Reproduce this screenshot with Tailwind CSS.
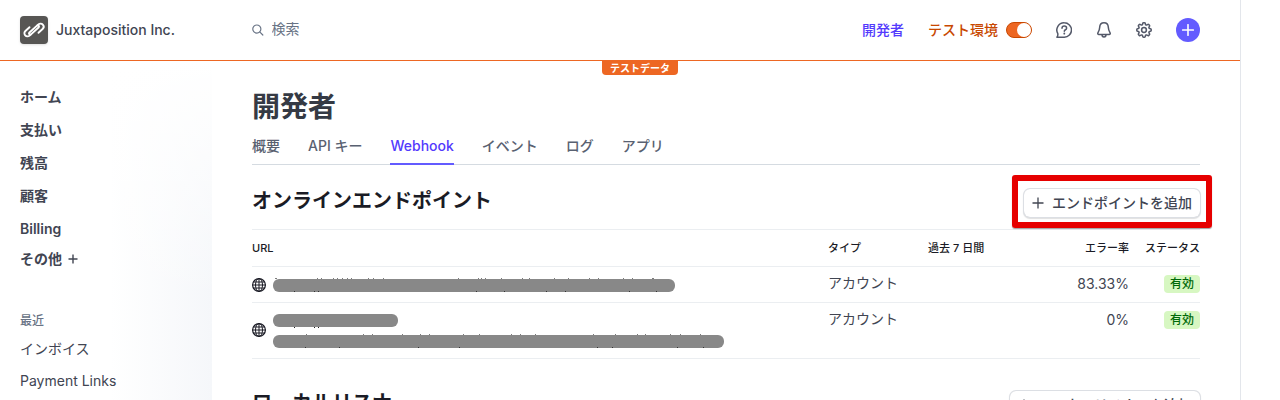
<!DOCTYPE html>
<html lang="ja">
<head>
    <meta charset="UTF-8">
    <meta name="viewport" content="width=device-width, initial-scale=1.0">
    <script src="https://cdn.jsdelivr.net/npm/@tailwindcss/browser@4"></script>
    <title>開発者 - Webhook</title>
</head>
<body class="relative h-screen overflow-hidden bg-white font-['Inter','Noto_Sans_CJK_JP',sans-serif] text-sm text-[#414552]">

<div class="mr-10 flex h-full flex-col shadow-[1px_0_0_#e3e6eb]">

    <!-- Top bar -->
    <header class="flex h-[61px] shrink-0 items-center border-b border-[#ed6723] pr-10">
        <div class="flex w-63 shrink-0 items-center gap-2 pl-5">
            <span class="size-7 rounded bg-[#575654] shadow-sm">
                <svg class="size-7" viewBox="0 0 28 28" fill="none" stroke="#fff" stroke-width="1.9" stroke-linecap="round" stroke-linejoin="round">
                    <path d="M9.500 11.200 5.400 15A3.100 3.100 0 0 0 9.600 19.600L18.800 11.200A1.200 1.200 0 0 0 17.200 9.500"/>
                    <path d="M18.500 16.800 22.600 13A3.100 3.100 0 0 0 18.400 8.400L9.200 16.800A1.200 1.200 0 0 0 10.800 18.500"/>
                </svg>
            </span>
            <span class="font-medium">Juxtaposition Inc.</span>
        </div>

        <label class="flex flex-1 items-center gap-2 text-[#687385]">
            <svg class="size-3" viewBox="0 0 12 12" fill="none" stroke="currentColor" stroke-width="1.2" stroke-linecap="round">
                <circle cx="5" cy="5" r="4.200"/>
                <path d="m8.200 8.200 3 3"/>
            </svg>
            <input type="search" placeholder="検索" aria-label="検索" class="w-full pb-0.5 outline-none placeholder:text-[#687385]">
        </label>

        <div class="flex shrink-0 items-center gap-6">
            <a href="#" class="font-medium text-[#533afd]">開発者</a>
            <label class="flex items-center gap-2 font-medium text-[#c84801]">
                テスト環境
                <input type="checkbox" checked class="h-4 w-[26px] appearance-none rounded-full border border-[#c84801] bg-[#ed6723] before:ml-auto before:block before:size-3.5 before:rounded-full before:bg-white">
            </label>
            <button type="button" aria-label="ヘルプ" class="text-[#545969]">
                <svg class="size-4" viewBox="0 0 16 16" fill="none" stroke="currentColor" stroke-width="1.5" stroke-linecap="round" stroke-linejoin="round">
                    <path d="M8.300.8a7.200 7.200 0 1 1 0 14.400H.9c.9-1 1.100-2.200.9-3.600A7.200 7.200 0 0 1 8.300.8z"/>
                    <path d="M6 6.300c0-3 4.600-2.900 4.600-.1 0 1.600-2.300 1.500-2.300 3"/>
                    <path d="M8.300 11.500v.2" stroke-width="1.800"/>
                </svg>
            </button>
            <button type="button" aria-label="通知" class="text-[#545969]">
                <svg class="size-4" viewBox="0 0 16 16" fill="none" stroke="currentColor" stroke-width="1.500" stroke-linejoin="round">
                    <path d="M8 .8C5.400.8 3.800 2.700 3.700 5.200c-.1 2.500-.6 3.700-1.800 5.600-.4.800 0 1.600.9 1.600h10.400c.9 0 1.300-.8.9-1.600-1.200-1.900-1.700-3.100-1.800-5.600C12.200 2.700 10.600.8 8 .8z"/>
                    <path d="M6 12.600c0 3.300 4 3.300 4 0"/>
                </svg>
            </button>
            <button type="button" aria-label="設定" class="text-[#545969]">
                <svg class="size-4" viewBox="2 2 20 20" fill="none" stroke="currentColor" stroke-width="1.9" stroke-linejoin="round">
                    <path d="M10.343 3.940c.09-.542.56-.94 1.110-.94h1.093c.55 0 1.020.398 1.110.94l.149.894c.07.424.384.764.78.930.398.164.855.142 1.205-.108l.737-.527a1.125 1.125 0 0 1 1.450.12l.773.774c.39.389.44 1.002.12 1.450l-.527.737c-.25.35-.272.806-.107 1.204.165.397.505.71.93.78l.893.15c.543.09.94.56.94 1.109v1.094c0 .55-.397 1.020-.94 1.110l-.893.149c-.425.07-.765.383-.93.78-.165.398-.143.854.107 1.204l.527.738c.32.447.269 1.060-.12 1.450l-.774.773a1.125 1.125 0 0 1-1.449.12l-.738-.527c-.35-.25-.806-.272-1.203-.107-.397.165-.71.505-.781.929l-.149.894c-.09.542-.56.94-1.110.94h-1.094c-.55 0-1.019-.398-1.110-.94l-.148-.894c-.071-.424-.384-.764-.781-.93-.398-.164-.854-.142-1.204.108l-.738.527c-.447.32-1.060.269-1.450-.12l-.773-.774a1.125 1.125 0 0 1-.12-1.450l.527-.737c.25-.35.273-.806.108-1.204-.165-.397-.505-.71-.93-.78l-.894-.15c-.542-.09-.94-.56-.94-1.109v-1.094c0-.55.398-1.020.94-1.110l.894-.149c.424-.07.765-.383.93-.78.165-.398.143-.854-.107-1.204l-.527-.738a1.125 1.125 0 0 1 .12-1.450l.773-.773a1.125 1.125 0 0 1 1.450-.12l.737.527c.35.25.807.272 1.204.107.397-.165.71-.505.78-.929l.15-.894z"/>
                    <circle cx="12" cy="12" r="3"/>
                </svg>
            </button>
            <button type="button" aria-label="作成" class="flex size-6 items-center justify-center rounded-full bg-[#635bff] text-white">
                <svg class="size-3" viewBox="0 0 12 12" stroke="currentColor" stroke-width="1.600" stroke-linecap="round"><path d="M6 .7v10.600M.7 6h10.600"/></svg>
            </button>
        </div>
    </header>

    <div class="flex min-h-0 flex-1">

        <!-- Sidebar -->
        <nav class="w-53 shrink-0 bg-[linear-gradient(to_bottom,#ffffff,#ffffff00_240px),linear-gradient(to_right,#ffffff_110px,#f5f7fa)] pt-5 pl-5 *:flex *:items-center">
            <a href="#" class="h-8 font-semibold">ホーム</a>
            <a href="#" class="h-[33px] font-semibold">支払い</a>
            <a href="#" class="h-[33px] font-semibold">残高</a>
            <a href="#" class="h-[33px] font-semibold">顧客</a>
            <a href="#" class="h-[33px] font-semibold">Billing</a>
            <button type="button" class="h-7 gap-1.5 font-semibold">
                その他
                <svg class="size-2.5" viewBox="0 0 10 10" stroke="currentColor" stroke-width="1.400"><path d="M5 .5v9M.5 5h9"/></svg>
            </button>
            <h2 class="mt-9 h-6 text-xs font-medium text-[#687385]">最近</h2>
            <a href="#" class="h-8">インボイス</a>
            <a href="#" class="h-8">Payment Links</a>
        </nav>

        <!-- Main column -->
        <main class="min-w-0 flex-1 px-10 pt-6">
            <h1 class="text-[28px] leading-11 font-bold text-[#353a44]">開発者</h1>

            <div class="flex h-9 gap-7 border-b border-[#d5dbe1] font-medium text-[#596171] *:-mb-px *:pt-[7px]">
                <a href="#">概要</a>
                <a href="#">API キー</a>
                <a href="#" class="border-b-2 border-[#635bff] text-[#533afd]">Webhook</a>
                <a href="#">イベント</a>
                <a href="#">ログ</a>
                <a href="#">アプリ</a>
            </div>

            <section>
                <div class="flex items-center justify-between pt-6 pb-3">
                    <h2 class="pb-1 text-xl leading-6 font-bold text-[#1a1b25]">オンラインエンドポイント</h2>
                    <div class="relative">
                        <button type="button" class="flex h-7 items-center gap-2 rounded-md px-2 font-medium shadow-[0_0_0_1px_#dcdfe4,0_1px_1px_1px_#00000020]">
                            <svg class="size-3" viewBox="0 0 12 12" stroke="currentColor" stroke-width="1.300"><path d="M6 .5v11M.5 6h11"/></svg>
                            エンドポイントを追加
                        </button>
                        <span class="pointer-events-none absolute -inset-x-3 -top-3.5 -bottom-[11px] rounded-[3px] border-6 border-[#e60000] shadow-[0_1px_1px_#00000060]"></span>
                    </div>
                </div>

                <table class="w-full table-fixed border-separate border-spacing-0 border-t border-[#ebeef1]">
                    <thead>
                        <tr class="h-[37px] text-left text-[11px] text-[#1a1b25] *:border-b *:border-[#ebeef1] *:pt-0.5 *:font-medium">
                            <th>URL</th>
                            <th class="w-25">タイプ</th>
                            <th class="w-25">過去 7 日間</th>
                            <th class="w-[101px] text-right">エラー率</th>
                            <th class="w-[71px] text-right">ステータス</th>
                        </tr>
                    </thead>
                    <tbody>
                        <tr class="*:border-b *:border-[#ebeef1] *:align-top">
                            <td>
                                <div class="flex items-center gap-[7px] pt-3 pb-2.5">
                                    <svg class="-mt-0.5 size-3.5 shrink-0 text-[#1a1b25]" viewBox="0 0 14 14" fill="none" stroke="currentColor"><circle cx="7" cy="7" r="6.400" stroke-width="1.200"/><ellipse cx="7" cy="7" rx="3.500" ry="6.400"/><path d="M7 .5v13M.5 7h13M1.500 4h11M1.500 10h11"/></svg>
                                    <!-- masked URL, tips of the letters still show at the edges -->
                                    <svg class="h-[13px] w-[402px] overflow-visible" viewBox="0 0 402 13">
                                        <rect width="402" height="13" rx="6" fill="#888"/>
                                        <path fill="#444" opacity=".7" d="M2-1h2v1h-2zM44-1h1v1h-1zM48-1h1v1h-1zM60-1h1v1h-1zM64-1h1v1h-1zM69-1h1v1h-1zM74-1h1v1h-1zM78-1h1v1h-1zM95-1h1v1h-1zM100-1h1v1h-1zM110-1h1v1h-1zM185-1h1v1h-1zM205-1h1v1h-1zM208-1h1v1h-1zM212-1h1v1h-1zM228-1h1v1h-1zM249-1h1v1h-1zM256-1h1v1h-1zM281-1h1v1h-1zM295-1h1v1h-1zM316-1h1v1h-1zM325-1h1v1h-1zM350-1h1v1h-1zM359-1h1v1h-1zM379-1h2v1h-2z"/>
                                        <path fill="#333" d="M21 12h1v1h-1zM41 12h1v1h-1zM45 12h1v1h-1zM203 12h1v1h-1zM231 12h1v1h-1zM273 12h1v1h-1zM292 12h1v1h-1zM356 12h1v1h-1zM383 12h1v1h-1z"/>
                                    </svg>
                                </div>
                            </td>
                            <td class="pt-1.5">アカウント</td>
                            <td></td>
                            <td class="pt-[7px] text-right">83.33%</td>
                            <td class="pt-2"><span class="ml-auto block h-[18px] w-9 rounded bg-[#d7f7c2] text-center text-xs leading-[18px] font-medium text-[#006908]">有効</span></td>
                        </tr>
                        <tr class="*:border-b *:border-[#ebeef1] *:align-top">
                            <td>
                                <div class="flex items-center gap-[7px] pt-[11px] pb-2.5">
                                    <svg class="-mt-0.5 size-3.5 shrink-0 text-[#1a1b25]" viewBox="0 0 14 14" fill="none" stroke="currentColor"><circle cx="7" cy="7" r="6.400" stroke-width="1.200"/><ellipse cx="7" cy="7" rx="3.500" ry="6.400"/><path d="M7 .5v13M.5 7h13M1.500 4h11M1.500 10h11"/></svg>
                                    <div class="flex flex-col gap-2">
                                        <svg class="h-[13px] w-[125px] overflow-visible" viewBox="0 0 125 13">
                                            <rect width="125" height="13" rx="6" fill="#888"/>
                                            <path fill="#222" d="M21 13h1v1h-1zM41 13h1v1h-1zM45 13h1v1h-1z"/>
                                        </svg>
                                        <svg class="h-[13px] w-[451px] overflow-visible" viewBox="0 0 451 13">
                                            <rect width="451" height="13" rx="6" fill="#888"/>
                                            <path fill="#444" opacity=".7" d="M33-1h1v1h-1zM90-1h1v1h-1zM99-1h1v1h-1zM129-1h1v1h-1zM147-1h1v1h-1zM156-1h1v1h-1zM190-1h1v1h-1zM206-1h1v1h-1zM238-1h1v1h-1zM247-1h1v1h-1zM262-1h1v1h-1zM320-1h1v1h-1zM342-1h1v1h-1zM364-1h1v1h-1zM372-1h1v1h-1zM397-1h1v1h-1zM407-1h1v1h-1zM427-1h1v1h-1z"/>
                                            <path fill="#333" d="M32 12h1v1h-1zM66 12h1v1h-1zM145 12h1v1h-1zM186 12h1v1h-1zM324 12h1v1h-1zM339 12h1v1h-1zM404 12h1v1h-1zM430 12h1v1h-1z"/>
                                        </svg>
                                    </div>
                                </div>
                            </td>
                            <td class="pt-1.5">アカウント</td>
                            <td></td>
                            <td class="pt-[7px] text-right">0%</td>
                            <td class="pt-2"><span class="ml-auto block h-[18px] w-9 rounded bg-[#d7f7c2] text-center text-xs leading-[18px] font-medium text-[#006908]">有効</span></td>
                        </tr>
                    </tbody>
                </table>
            </section>

            <section>
                <div class="flex items-center justify-between pt-8 pb-3">
                    <h2 class="pb-1 text-xl leading-6 font-bold text-[#1a1b25]">ローカルリスナー</h2>
                    <button type="button" class="flex h-7 items-center gap-2 rounded-md px-2 font-medium shadow-[0_0_0_1px_#dcdfe4,0_1px_1px_1px_#00000020]">
                        <svg class="size-3" viewBox="0 0 12 12" stroke="currentColor" stroke-width="1.300"><path d="M6 .5v11M.5 6h11"/></svg>
                        ローカルリスナーを追加
                    </button>
                </div>
            </section>
        </main>
    </div>
</div>

<!-- Test data tag hanging from the top bar -->
<span class="absolute top-[61px] left-1/2 -translate-x-1/2 rounded-b bg-[#ed6723] px-2 text-[10px] leading-[14px] font-bold text-white">テストデータ</span>

</body>
</html>
